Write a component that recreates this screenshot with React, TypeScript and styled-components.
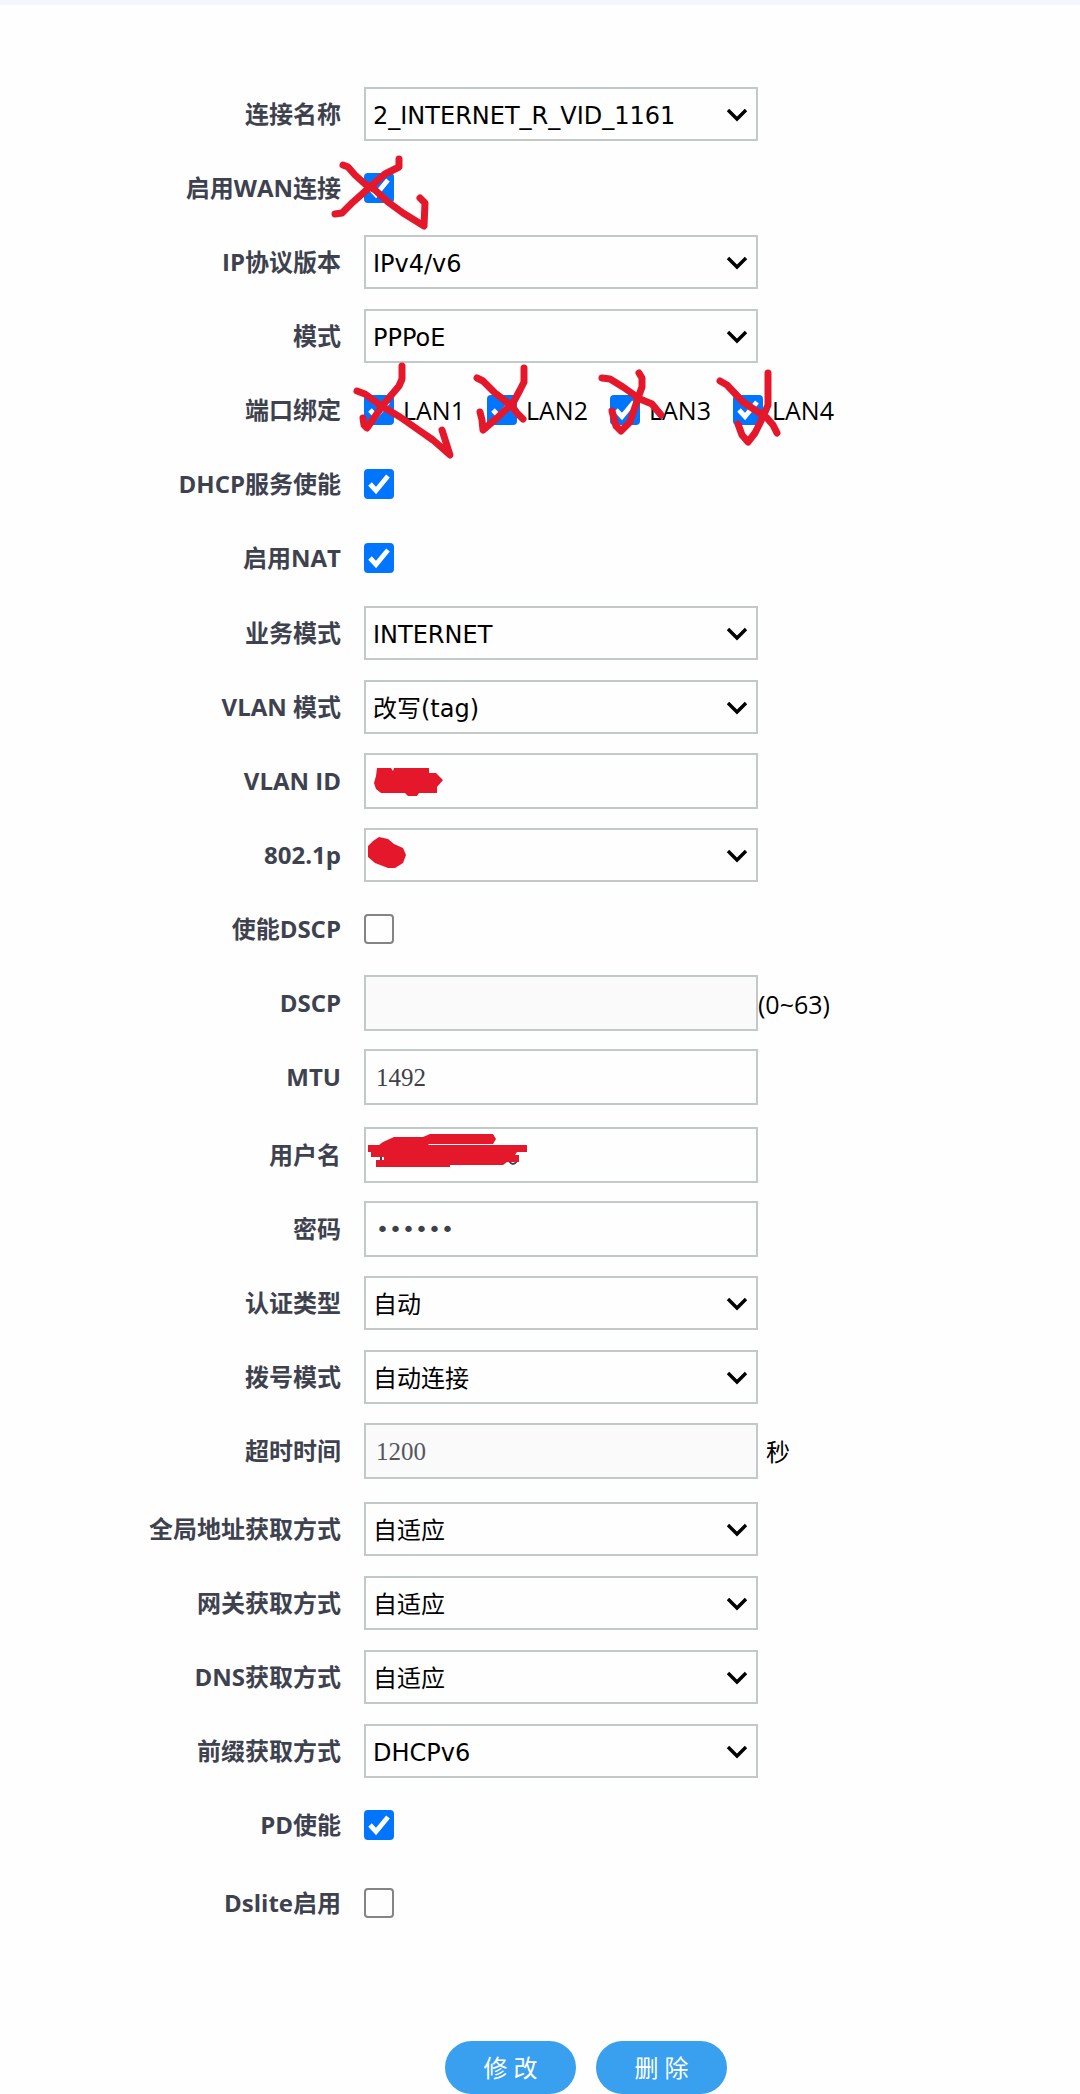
import React, { useId } from 'react';
import styled, { createGlobalStyle } from 'styled-components';

const GlobalStyle = createGlobalStyle`
  *, *::before, *::after { box-sizing: border-box; }
  body {
    margin: 0;
    background: #fefefe;
    color: #000;
    font-family: 'Open Sans', 'Noto Sans CJK SC', sans-serif;
    font-size: 24px;
    line-height: 32px;
  }
`;

const TopStrip = styled.header`
  height: 5px;
  background: #f3f7fc;
`;

const Form = styled.form`
  padding-top: 72px;
`;

const Group = styled.div<{ $gap?: number }>`
  margin-top: ${(p) => p.$gap ?? 0}px;
`;

const Row = styled.div`
  display: grid;
  grid-template-columns: 341px minmax(0, 1fr);
  column-gap: 23px;
  align-items: center;
  min-height: 74px;
`;

const Label = styled.label`
  color: #3e424e;
  font-weight: 700;
  text-align: right;
  white-space: nowrap;
`;

const Control = styled.div`
  position: relative;
  display: flex;
  align-items: center;
  min-height: 74px;
`;

const SelectBox = styled.div`
  position: relative;
  width: 100%;
  max-width: 394px;
`;

const SelectField = styled.select`
  display: block;
  appearance: none;
  width: 100%;
  height: 54px;
  padding: 3px 40px 0 7px;
  border: 2px solid #c3c9c8;
  border-radius: 0;
  background: #fefefe;
  color: #000;
  font-family: 'DejaVu Sans', 'Noto Sans CJK SC', sans-serif;
  font-size: 24px;
`;

const Chevron = styled.svg`
  position: absolute;
  top: 21px;
  right: 10px;
  width: 22px;
  height: 14px;
  pointer-events: none;
`;

const TextField = styled.input`
  width: 100%;
  max-width: 394px;
  height: 56px;
  padding: 2px 10px 0;
  border: 2px solid #c3c9c8;
  border-radius: 0;
  background: #fefefe;
  color: #3e404a;
  font-family: 'Liberation Serif', serif;
  font-size: 25px;

  &[type='password'] {
    padding-top: 0;
    font-family: 'DejaVu Sans', sans-serif;
    font-size: 22px;
  }

  &:disabled {
    background: #fafafa;
    color: #55565e;
  }
`;

const TickBox = styled.span`
  position: relative;
  flex: none;
  width: 30px;
  height: 30px;
`;

const Tick = styled.input`
  display: block;
  appearance: none;
  width: 100%;
  height: 100%;
  margin: 0;
  border: 2px solid #858384;
  border-radius: 4px;
  background: #fefefe;

  &:checked {
    border-color: #0075ff;
    background: #0075ff;
  }

  & + svg {
    display: none;
  }

  &:checked + svg {
    display: block;
  }
`;

const TickMark = styled.svg`
  position: absolute;
  inset: 0;
  width: 100%;
  height: 100%;
  pointer-events: none;
`;

const Port = styled.label`
  display: flex;
  flex: 0 0 123px;
  align-items: center;
  gap: 9px;
  font-size: 25px;
`;

const Unit = styled.span<{ $spaced?: boolean }>`
  margin-left: ${(p) => (p.$spaced ? 8 : 0)}px;
  padding-top: 2px;
  font-size: ${(p) => (p.$spaced ? 24 : 25)}px;
`;

const Ink = styled.svg`
  position: absolute;
  top: 0;
  left: 0;
  width: 1px;
  height: 1px;
  overflow: visible;
  pointer-events: none;
  fill: none;
  stroke: #e5182b;
  stroke-width: 7px;
  stroke-linecap: round;
  stroke-linejoin: round;
`;

const Blot = styled.path`
  fill: #e5182b;
  stroke: none;
`;

const Peek = styled.path`
  stroke: #3e404a;
  stroke-width: 2px;
`;

const Actions = styled.div`
  display: flex;
  gap: 20px;
  margin-top: 101px;
  padding-left: 445px;
`;

const PillButton = styled.button`
  width: 131px;
  height: 53px;
  padding: 0 0 3px;
  border: 0;
  border-radius: 27px;
  background: #38a0ee;
  color: #fff;
  font-family: 'Open Sans', 'Noto Sans CJK SC', sans-serif;
  font-size: 24px;
  cursor: pointer;
`;

type FieldProps = { label: string; children?: React.ReactNode };

function SelectRow({ label, value, children }: FieldProps & { value: string }) {
  const id = useId();
  return (
    <Row>
      <Label htmlFor={id}>{label}</Label>
      <Control>
        <SelectBox>
          <SelectField id={id} defaultValue={value}>
            <option value={value}>{value}</option>
          </SelectField>
          <Chevron viewBox="0 0 22 14" aria-hidden="true">
            <path d="M2 2 L11 11 L20 2" fill="none" stroke="#000" strokeWidth="3.4" />
          </Chevron>
        </SelectBox>
        {children}
      </Control>
    </Row>
  );
}

type TextRowProps = FieldProps & { value?: string; type?: string; disabled?: boolean };

function TextRow({ label, value = '', type = 'text', disabled, children }: TextRowProps) {
  const id = useId();
  return (
    <Row>
      <Label htmlFor={id}>{label}</Label>
      <Control>
        <TextField id={id} type={type} defaultValue={value} disabled={disabled} />
        {children}
      </Control>
    </Row>
  );
}

function CheckBox({ id, checked }: { id?: string; checked?: boolean }) {
  return (
    <TickBox>
      <Tick id={id} type="checkbox" defaultChecked={checked} />
      <TickMark viewBox="0 0 30 30" aria-hidden="true">
        <path d="M6 15 L12 21.5 L24 7" fill="none" stroke="#fff" strokeWidth="4.8" />
      </TickMark>
    </TickBox>
  );
}

function CheckRow({ label, checked, children }: FieldProps & { checked?: boolean }) {
  const id = useId();
  return (
    <Row>
      <Label htmlFor={id}>{label}</Label>
      <Control>
        <CheckBox id={id} checked={checked} />
        {children}
      </Control>
    </Row>
  );
}

function PortRow() {
  const id = useId();
  return (
    <Row role="group" aria-labelledby={id}>
      <Label as="span" id={id}>端口绑定</Label>
      <Control>
        {['LAN1', 'LAN2', 'LAN3', 'LAN4'].map((port) => (
          <Port key={port}>
            <CheckBox checked />
            {port}
          </Port>
        ))}
        <Ink aria-hidden="true">
          <path d="M-7 18 L1 21 L16 32 L36 44 L56 58 L69 67 L86 82 L78 57" />
          <path d="M38 -7 V6 L35 13 L19 32 L3 55 L0 52 L-1 45" />
          <path d="M113 5 L119 8 L131 20 L148 33 L153 40 L159 46" />
          <path d="M160 -5 V9 L156 17 L149 30 L133 45 L119 57 L118 47 L116 39" />
          <path d="M238 5 L246 6 L259 14 L276 26 L288 31 L297 42" />
          <path d="M275 0 L278 5 V14 L274 25 L266 49 L257 58 L252 53 L248 38" />
          <path d="M356 8 L363 12 L379 29 L403 45 L409 52 L413 60" />
          <path d="M404 0 V32 L399 44 L391 60 L384 69 L378 62 L374 51" />
        </Ink>
      </Control>
    </Row>
  );
}

export default function App() {
  return (
    <>
      <GlobalStyle />
      <TopStrip />
      <Form onSubmit={(e) => e.preventDefault()}>
        <Group>
          <SelectRow label="连接名称" value="2_INTERNET_R_VID_1161" />
          <CheckRow label="启用WAN连接" checked>
            <Ink aria-hidden="true">
              <path d="M-21 14 L-16 16 L-9 24 L1 33 L11 39 L24 51 L39 62 L60 75 L61 52 L56 47" />
              <path d="M35 8 V16 L21 23 L6 36 L-12 52 L-22 62 L-29 63" />
            </Ink>
          </CheckRow>
          <SelectRow label="IP协议版本" value="IPv4/v6" />
          <SelectRow label="模式" value="PPPoE" />
          <PortRow />
          <CheckRow label="DHCP服务使能" checked />
          <CheckRow label="启用NAT" checked />
        </Group>
        <Group $gap={1}>
          <SelectRow label="业务模式" value="INTERNET" />
          <SelectRow label="VLAN 模式" value="改写(tag)" />
          <TextRow label="VLAN ID">
            <Ink aria-hidden="true">
              <Blot d="M13 24 H27 L29 27 L30 24 H65 V29 H72 L79 36 L73 43 V49 H55 L53 52 H44 L41 49 H17 L12 45 L10 39 L12 32 Z" />
            </Ink>
          </TextRow>
          <SelectRow label="802.1p" value="">
            <Ink aria-hidden="true">
              <Blot d="M15 19 L24 21 L30 26 L39 30 L42 37 L39 45 L31 50 H24 L11 45 L4 39 V28 L9 23 Z" />
            </Ink>
          </SelectRow>
          <CheckRow label="使能DSCP" />
          <TextRow label="DSCP" disabled>
            <Unit>(0~63)</Unit>
          </TextRow>
          <TextRow label="MTU" value="1492" />
        </Group>
        <Group $gap={4}>
          <TextRow label="用户名">
            <Ink aria-hidden="true">
              <Peek d="M145 43 Q149 49 153 43 M17 39 V42" />
              <Blot d="M4 27 H15 L19 24 L30 19 H59 L66 16 H129 L132 21 L129 26 H64 L65 27 H163 V34 H153 L151 37 H155 V44 H143 L139 47 H86 V49 H12 V42 H20 V39 H7 V34 H4 Z" />
            </Ink>
          </TextRow>
          <TextRow label="密码" type="password" value="123456" />
          <SelectRow label="认证类型" value="自动" />
          <SelectRow label="拨号模式" value="自动连接" />
          <TextRow label="超时时间" value="1200" disabled>
            <Unit $spaced>秒</Unit>
          </TextRow>
        </Group>
        <Group $gap={4}>
          <SelectRow label="全局地址获取方式" value="自适应" />
          <SelectRow label="网关获取方式" value="自适应" />
          <SelectRow label="DNS获取方式" value="自适应" />
          <SelectRow label="前缀获取方式" value="DHCPv6" />
          <CheckRow label="PD使能" checked />
        </Group>
        <Group $gap={4}>
          <CheckRow label="Dslite启用" />
        </Group>
        <Actions>
          <PillButton type="submit">修 改</PillButton>
          <PillButton type="button">删 除</PillButton>
        </Actions>
      </Form>
    </>
  );
}
